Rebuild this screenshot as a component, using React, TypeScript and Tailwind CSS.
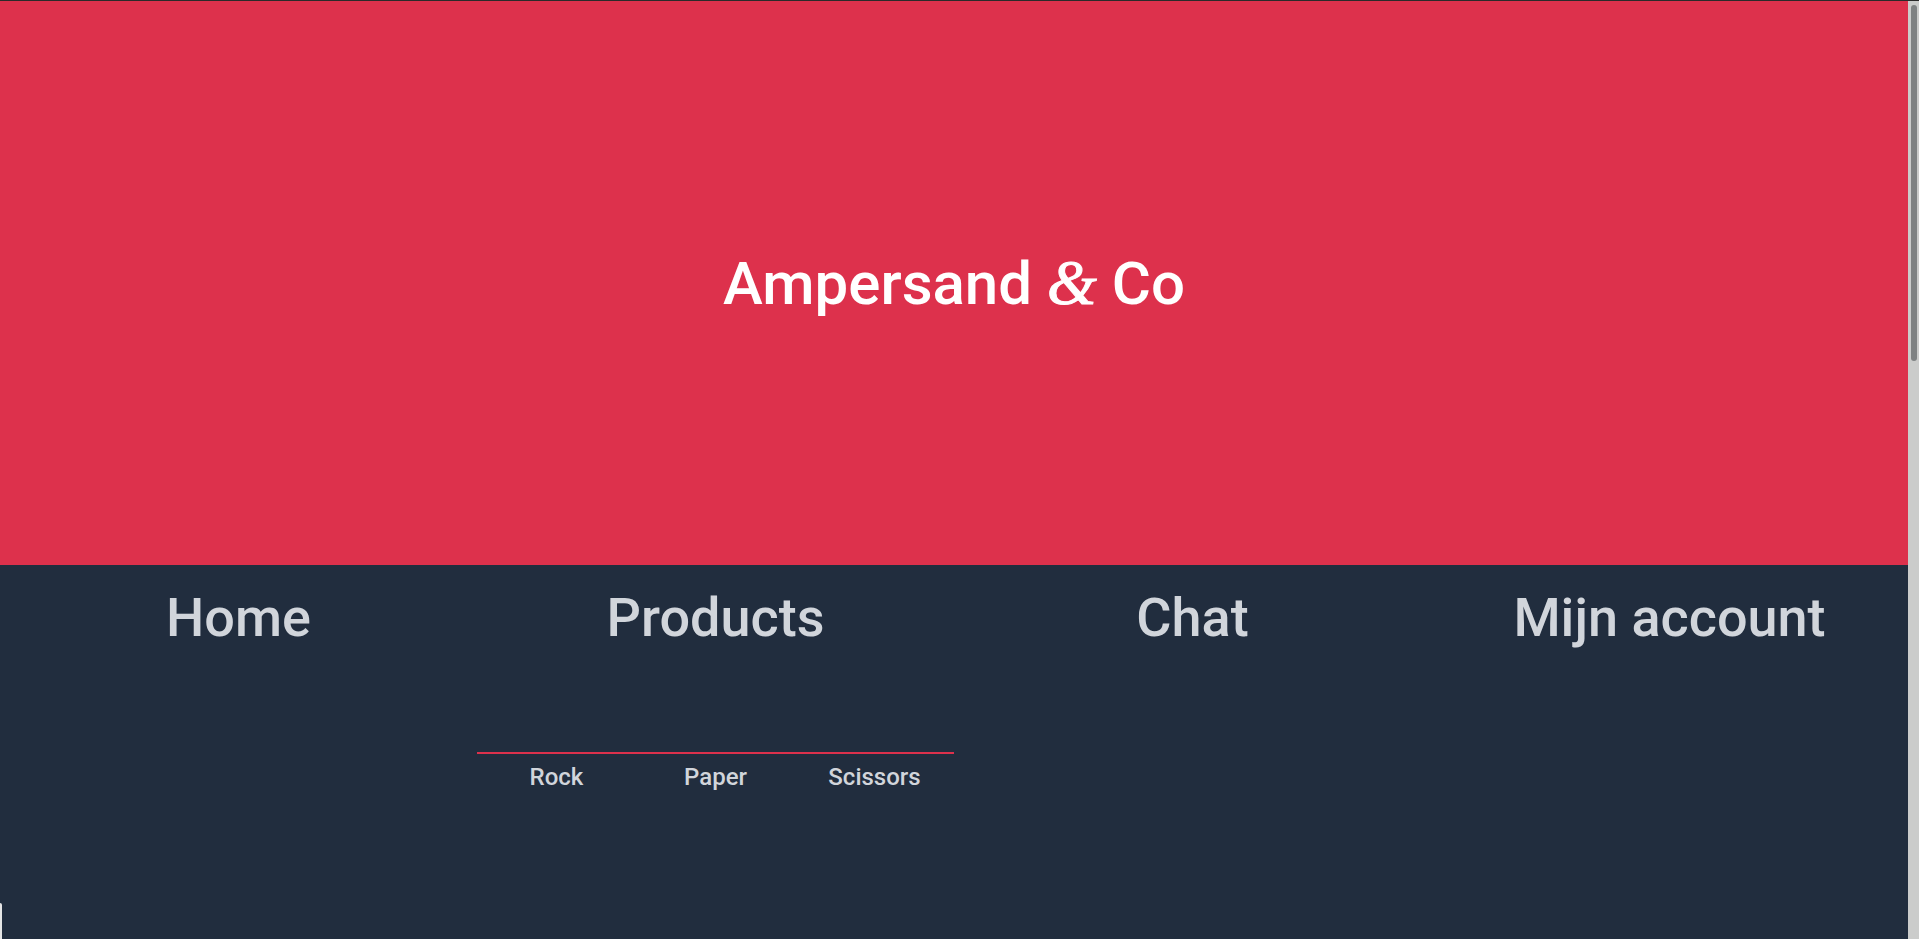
import React from "react";

export default function App() {
  return (
    <div className="relative flex h-screen w-full flex-col overflow-hidden bg-[#212d3e]" style={{ fontFamily: "Roboto, 'Noto Sans', sans-serif" }}>
      <div className="h-[1px] w-full shrink-0 bg-[#2a2a2a]" />
      <div className="flex min-h-0 flex-1">
        <main className="flex min-w-0 flex-1 flex-col">
          <header className="flex h-[564px] shrink-0 items-center justify-center bg-[#dd314c]">
            <h1 className="text-[60px] font-medium leading-none text-white">
              Ampersand{" "}
              <span className="text-[64px] font-normal italic" style={{ fontFamily: "'Liberation Serif', 'Times New Roman', serif", WebkitTextStroke: "1px white" }}>&amp;</span>{" "}
              Co
            </h1>
          </header>
          <nav className="grid flex-1 grid-cols-4 items-start bg-[#212d3e] pt-[26px] text-[#d1d5db]">
            <div className="text-center text-[54px] font-medium leading-none">Home</div>
            <div className="flex flex-col items-center">
              <div className="text-[54px] font-medium leading-none">Products</div>
              <ul className="mt-[107px] grid w-full grid-cols-3 border-t-2 border-[#dd314c] pt-[11px] text-[24px] font-medium leading-none">
                <li className="text-center">Rock</li>
                <li className="text-center">Paper</li>
                <li className="text-center">Scissors</li>
              </ul>
            </div>
            <div className="text-center text-[54px] font-medium leading-none">Chat</div>
            <div className="text-center text-[54px] font-medium leading-none">Mijn account</div>
          </nav>
        </main>
        <aside className="flex w-[11px] shrink-0 justify-center bg-[#cbcccb] pt-[4px]">
          <div className="h-[356px] w-[6px] rounded-full bg-[#7f8283]" />
        </aside>
      </div>
      <div className="absolute bottom-0 left-0 h-[36px] w-[2px] rounded-tr-[2px] bg-[#e5e5e5]" />
    </div>
  );
}
